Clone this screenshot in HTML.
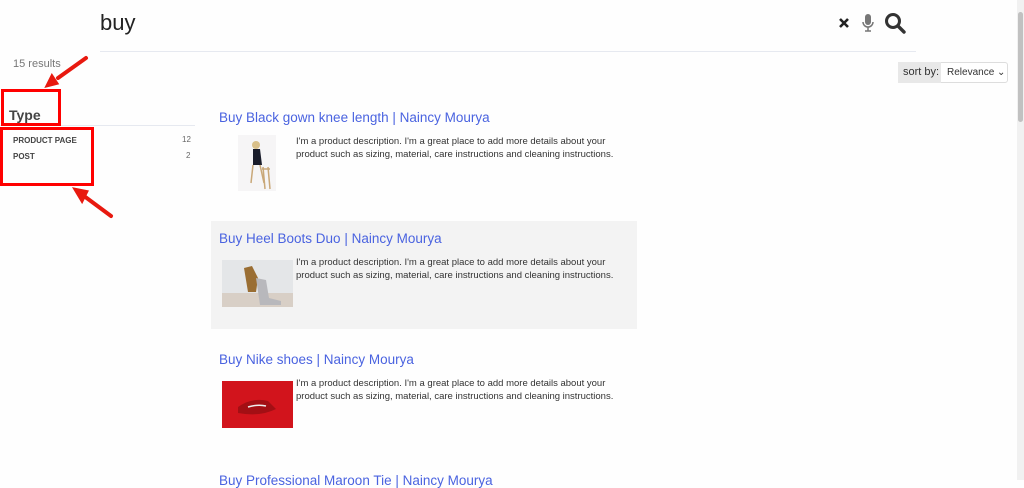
<!DOCTYPE html>
<html><head><meta charset="utf-8"><style>
*{margin:0;padding:0;box-sizing:border-box}
body{width:1024px;height:480px;overflow:hidden;background:#fefefe;font-family:"Liberation Sans",Arial,sans-serif;position:relative}
.abs{position:absolute}
.title{color:#4a63e0;font-size:13.5px;white-space:nowrap}
.desc{font-size:9.5px;color:#333;line-height:13px;width:340px}
.red{border:3px solid #f00}
</style></head><body>
<div class="abs" style="left:100px;top:10px;font-size:22px;color:#222">buy</div>
<svg class="abs" style="left:838px;top:17px" width="12" height="12" viewBox="0 0 12 12"><path d="M2 2L10 10M10 2L2 10" stroke="#222" stroke-width="2.6"/></svg>
<svg class="abs" style="left:861px;top:13px" width="14" height="20" viewBox="0 0 14 20"><rect x="4" y="1" width="6" height="11" rx="3" fill="#777"/><path d="M2 9a5 5 0 0 0 10 0M7 14v4M4 18h6" stroke="#777" stroke-width="1.5" fill="none"/></svg>
<svg class="abs" style="left:884px;top:12px" width="22" height="22" viewBox="0 0 22 22"><circle cx="9" cy="9" r="6.5" stroke="#333" stroke-width="3" fill="none"/><path d="M14 14L20 20" stroke="#333" stroke-width="3.4" stroke-linecap="round"/></svg>
<div class="abs" style="left:100px;top:51px;width:816px;height:1px;background:#e6e9f0"></div>
<div class="abs" style="left:13px;top:58px;font-size:11px;color:#777">15 results</div>
<div class="abs" style="left:898px;top:62px;width:110px;height:21px;border:1px solid #ddd;border-radius:3px;background:#fff"></div>
<div class="abs" style="left:898px;top:62px;width:43px;height:21px;background:#e8e8e8;font-size:11px;color:#333;padding:4px 0 0 5px">sort by:</div>
<div class="abs" style="left:947px;top:67px;font-size:10px;color:#333">Relevance ⌄</div>
<div class="abs" style="left:9px;top:107px;font-size:14px;font-weight:bold;color:#444">Type</div>
<div class="abs" style="left:0;top:125px;width:195px;height:1px;background:#e6e9f0"></div>
<div class="abs" style="left:13px;top:136px;font-size:8px;font-weight:bold;color:#444">PRODUCT PAGE</div>
<div class="abs" style="left:13px;top:152px;font-size:8px;font-weight:bold;color:#444">POST</div>
<div class="abs" style="left:182px;top:135px;font-size:8px;color:#666">12</div>
<div class="abs" style="left:186px;top:151px;font-size:8px;color:#666">2</div>
<div class="abs red" style="left:1px;top:89px;width:60px;height:37px"></div>
<div class="abs red" style="left:0;top:127px;width:94px;height:59px"></div>
<svg class="abs" style="left:0;top:50px" width="130" height="180"><g stroke="#e8190f" stroke-width="4" fill="#e8190f" stroke-linecap="round"><path d="M86 8L58 28"/><path d="M48 35l8-2-4-6z"/><path d="M111 166L84 146"/><path d="M76 140l10 2-4 8z"/></g></svg>
<div class="abs title" style="left:219px;top:110px">Buy Black gown knee length | Naincy Mourya</div>
<div class="abs" style="left:238px;top:135px;width:38px;height:56px;background:#f6f5f6"></div>
<svg class="abs" style="left:238px;top:135px" width="38" height="56"><circle cx="18" cy="10" r="4" fill="#d9c08a"/><path d="M15 14h7l2 16h-9z" fill="#1a1d2b"/><path d="M15 30l-2 18M22 30l4 18M25 32l2 22M30 32l2 22M24 34h8" stroke="#c9a879" stroke-width="1.5"/></svg>
<div class="abs desc" style="left:296px;top:135px">I'm a product description. I'm a great place to add more details about your product such as sizing, material, care instructions and cleaning instructions.</div>
<div class="abs" style="left:211px;top:221px;width:426px;height:108px;background:#f3f3f3"></div>
<div class="abs title" style="left:219px;top:231px">Buy Heel Boots Duo | Naincy Mourya</div>
<div class="abs" style="left:222px;top:260px;width:71px;height:47px;background:linear-gradient(#e4e6e8 70%,#d8cfc6 70%)"></div>
<svg class="abs" style="left:222px;top:260px" width="71" height="47"><path d="M22 8l8-2 6 12-2 14h-8z" fill="#9a6e33"/><path d="M34 18l10 2 3 18 12 3v4H38z" fill="#b8b8bc"/></svg>
<div class="abs desc" style="left:296px;top:256px">I'm a product description. I'm a great place to add more details about your product such as sizing, material, care instructions and cleaning instructions.</div>
<div class="abs title" style="left:219px;top:352px">Buy Nike shoes | Naincy Mourya</div>
<div class="abs" style="left:222px;top:381px;width:71px;height:47px;background:#d2141c"></div>
<svg class="abs" style="left:222px;top:381px" width="71" height="47"><path d="M16 26q14-10 30-6l8 8q-16 8-38 4z" fill="#a30f14"/><path d="M26 26q10-3 18-1" stroke="#eee" stroke-width="1.5" fill="none"/></svg>
<div class="abs desc" style="left:296px;top:377px">I'm a product description. I'm a great place to add more details about your product such as sizing, material, care instructions and cleaning instructions.</div>
<div class="abs title" style="left:219px;top:473px">Buy Professional Maroon Tie | Naincy Mourya</div>
<div class="abs" style="left:1017px;top:0;width:7px;height:480px;background:#f1f1f1"></div>
<div class="abs" style="left:1018px;top:12px;width:5px;height:110px;background:#c1c1c1;border-radius:3px"></div>
</body></html>
